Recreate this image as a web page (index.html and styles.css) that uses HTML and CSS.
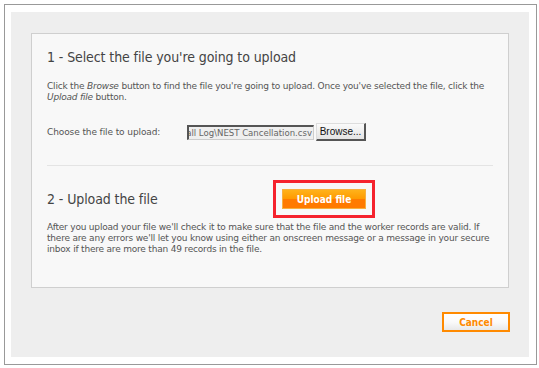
FILE: index.html
```html
<!DOCTYPE html>
<html lang="en">
<head>
    <meta charset="UTF-8">
    <title>Upload file</title>
    <link rel="stylesheet" href="styles.css">
</head>
<body>
    <div class="frame">
        <div class="page">
            <div class="panel">
                <h2 class="step-title">1 - Select the file you're going to upload</h2>
                <p class="step-text">Click the <em>Browse</em> button to find the file you're going to upload. Once you've selected the file, click the <em>Upload file</em> button.</p>
                <div class="file-row">
                    <span class="file-label">Choose the file to upload:</span>
                    <div class="file-input"><span>C:\Call Log\NEST Cancellation.csv</span></div>
                    <button class="browse-btn">Browse...</button>
                </div>
                <div class="divider"></div>
                <div class="upload-row">
                    <h2 class="step-title upload-title">2 - Upload the file</h2>
                    <div class="highlight">
                        <button class="upload-btn">Upload file</button>
                    </div>
                </div>
                <p class="step-text">After you upload your file we'll check it to make sure that the file and the worker records are valid. If there are any errors we'll let you know using either an onscreen message or a message in your secure inbox if there are more than 49 records in the file.</p>
            </div>
            <div class="actions">
                <button class="cancel-btn">Cancel</button>
            </div>
        </div>
    </div>
</body>
</html>
```

FILE: styles.css
```css
body {
    margin: 0;
    padding: 0;
    background: #fff;
    font-family: "DejaVu Sans", Verdana, sans-serif;
    color: #555;
}

.frame {
    width: 518px;
    height: 345px;
    margin: 4px 0 0 4px;
    padding: 7px 7px 7px 6px;
    border: 1px solid #999;
}

.page {
    height: 100%;
    background: #eeeeee;
    padding: 21px 20px 0 20px;
    box-sizing: border-box;
}

.panel {
    height: 255px;
    box-sizing: border-box;
    background: #f8f8f8;
    border: 1px solid #cfcfcf;
    padding: 12px 15px 0 15px;
}

.step-title {
    margin: 0;
    font-family: "DejaVu Sans Condensed", "DejaVu Sans", sans-serif;
    font-stretch: condensed;
    font-weight: normal;
    font-size: 14px;
    color: #444;
    line-height: 22px;
    letter-spacing: -0.1px;
}

.step-text {
    margin: 13px 0 0;
    font-size: 9px;
    line-height: 11px;
    letter-spacing: -0.2px;
}

.file-row {
    display: flex;
    align-items: center;
    margin-top: 20px;
    font-size: 9px;
}

.file-label {
    width: 140px;
    letter-spacing: -0.1px;
}

.file-input {
    width: 122px;
    height: 12px;
    display: flex;
    justify-content: flex-end;
    overflow: hidden;
    white-space: nowrap;
    background: #efefef;
    border-style: solid;
    border-width: 2px 1px 1px 2px;
    border-color: #555 #ccc #ccc #555;
    padding: 0 1px;
    line-height: 12px;
    font-family: "DejaVu Sans Condensed", "DejaVu Sans", sans-serif;
    font-stretch: condensed;
    font-size: 9.5px;
    color: #666;
}

.browse-btn {
    margin-left: 2px;
    width: 50px;
    height: 18px;
    padding: 0;
    font-family: "Liberation Sans Narrow", "Liberation Sans", Arial, sans-serif;
    font-size: 10px;
    color: #111;
    background: linear-gradient(#fafafa, #e4e4e4);
    border-style: solid;
    border-width: 1px 2px 2px 1px;
    border-color: #ddd #555 #555 #ddd;
}

.divider {
    height: 1px;
    background: #e4e4e4;
    margin: 24px 0 0;
    width: 446px;
}

.upload-row {
    display: flex;
    align-items: center;
    margin-top: 14px;
}

.upload-title {
    width: 226px;
}

.highlight {
    border: 3px solid #f5222d;
    padding: 6px;
}

.upload-btn {
    display: block;
    width: 84px;
    height: 20px;
    padding: 0;
    border: 1px solid #f7b040;
    background: linear-gradient(#ffb21a 0%, #ff9a00 50%, #ff7a00 51%, #ff7a00 100%);
    color: #fff;
    font-family: "DejaVu Sans Condensed", "DejaVu Sans", sans-serif;
    font-stretch: condensed;
    font-weight: bold;
    font-size: 10px;
}

.upload-row + .step-text {
    margin-top: 4px;
}

.actions {
    display: flex;
    justify-content: flex-end;
    margin-top: 24px;
    margin-right: -1px;
}

.cancel-btn {
    width: 68px;
    height: 20px;
    padding: 0;
    border: 2px solid #ff8a00;
    background: linear-gradient(#ffffff 0%, #fafafa 50%, #e8e8e8 100%);
    color: #ff8a00;
    font-family: "DejaVu Sans Condensed", "DejaVu Sans", sans-serif;
    font-stretch: condensed;
    font-weight: bold;
    font-size: 10px;
}
```
